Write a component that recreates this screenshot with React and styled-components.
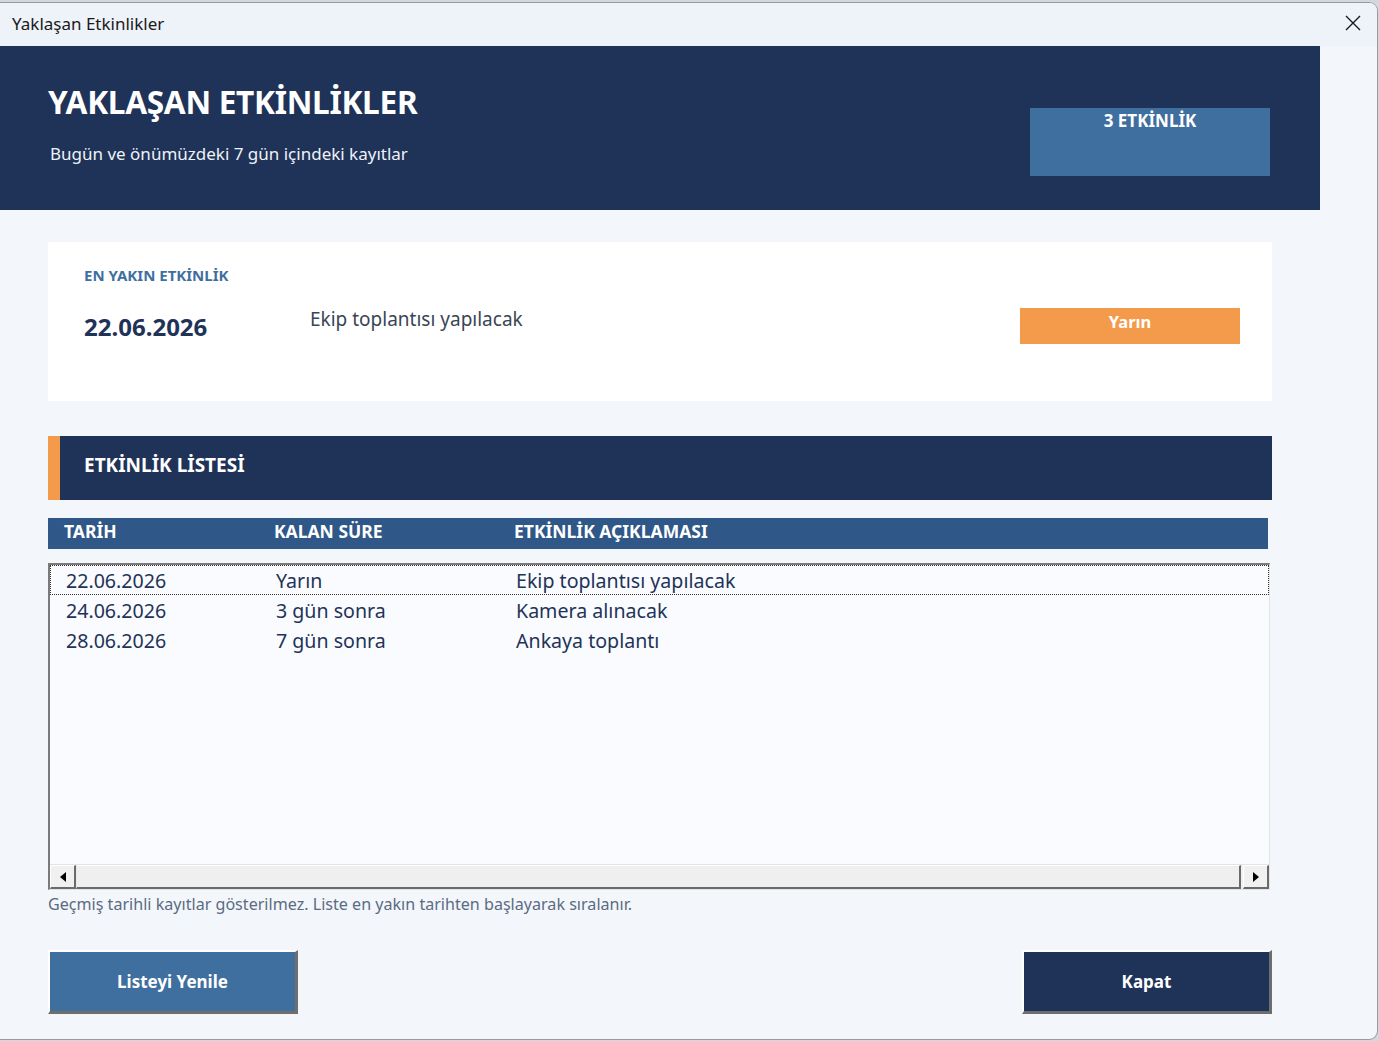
import React from 'react'
import styled, { createGlobalStyle } from 'styled-components'

const GlobalStyle = createGlobalStyle`
  html, body {
    margin: 0;
    padding: 0;
    background: #cfd8e3;
  }
  body {
    font-family: "Noto Sans", "Open Sans", sans-serif;
  }
`

const events = [
  { date: '22.06.2026', left: 'Yarın', text: 'Ekip toplantısı yapılacak' },
  { date: '24.06.2026', left: '3 gün sonra', text: 'Kamera alınacak' },
  { date: '28.06.2026', left: '7 gün sonra', text: 'Ankaya toplantı' },
]

const Window = styled.div`
  margin-top: 2px;
  width: 1378px;
  height: 1038px;
  box-sizing: border-box;
  border: 1px solid #9a9a9a;
  border-left: none;
  border-radius: 0 9px 9px 0;
  background: #f3f6fb;
  overflow: hidden;
  display: flex;
  flex-direction: column;
`

const TitleBar = styled.div`
  height: 43px;
  flex: none;
  box-sizing: border-box;
  display: flex;
  align-items: center;
  justify-content: space-between;
  padding: 0 14px 3px 12px;
  background: #eef2f9;
  color: #1a1a1a;
  font-size: 17px;
`

const CloseButton = styled.button`
  border: none;
  background: transparent;
  padding: 0;
  width: 20px;
  height: 20px;
  display: flex;
  align-items: center;
  justify-content: center;
  cursor: pointer;
`

const Header = styled.header`
  width: 1320px;
  height: 164px;
  flex: none;
  box-sizing: border-box;
  background: #1f3358;
  display: flex;
  justify-content: space-between;
  padding: 0 50px 0 48px;
`

const HeaderText = styled.div`
  padding-top: 37px;
`

const HeaderTitle = styled.h1`
  margin: 0;
  color: #ffffff;
  font-size: 31.6px;
  font-weight: 700;
  line-height: 38px;
  letter-spacing: -0.3px;
`

const HeaderSub = styled.p`
  margin: 22px 0 0 2px;
  color: #eef2f8;
  font-size: 17px;
  line-height: 22px;
`

const CountBadge = styled.div`
  margin-top: 62px;
  width: 240px;
  height: 68px;
  background: #3f6f9f;
  color: #ffffff;
  font-weight: 700;
  font-size: 17px;
  text-align: center;
  line-height: 26px;
`

const Body = styled.div`
  padding: 0 0 0 48px;
  width: 1224px;
`

const Card = styled.section`
  margin-top: 32px;
  height: 159px;
  box-sizing: border-box;
  background: #ffffff;
  padding: 22px 32px 0 36px;
`

const CardLabel = styled.div`
  color: #3f6fa0;
  font-size: 15px;
  font-weight: 700;
  line-height: 22px;
`

const CardRow = styled.div`
  margin-top: 18px;
  display: grid;
  grid-template-columns: 226px 1fr 220px;
`

const CardDate = styled.div`
  color: #1f3358;
  font-size: 24px;
  font-weight: 700;
  line-height: 30px;
  padding-top: 8px;
`

const CardText = styled.div`
  color: #3a4556;
  font-size: 19px;
  line-height: 26px;
  padding-top: 2px;
`

const WhenBadge = styled.div`
  margin-top: 4px;
  height: 36px;
  background: #f39b4a;
  color: #ffffff;
  font-size: 16.5px;
  font-weight: 700;
  text-align: center;
  line-height: 28px;
`

const SectionBar = styled.div`
  margin-top: 35px;
  height: 64px;
  box-sizing: border-box;
  background: #1f3358;
  border-left: 12px solid #f39b4a;
  display: flex;
  align-items: center;
  padding: 0 0 6px 24px;
  color: #ffffff;
  font-size: 19px;
  font-weight: 700;
`

const Columns = styled.div`
  display: grid;
  grid-template-columns: ${({ $indent }) => `${210 + $indent}px ${240}px 1fr`};
`

const ColumnHead = styled(Columns)`
  margin-top: 18px;
  width: 1220px;
  height: 31px;
  box-sizing: border-box;
  background: #2f5788;
  color: #ffffff;
  font-weight: 700;
  font-size: 17.5px;
  line-height: 27px;
  padding-left: 16px;
`

const ListBox = styled.div`
  margin-top: 14px;
  width: 1222px;
  height: 327px;
  box-sizing: border-box;
  border-top: 2px solid #7a7a7a;
  border-left: 2px solid #7a7a7a;
  border-right: 1px solid #e3e3e3;
  border-bottom: 1px solid #e3e3e3;
  background: #fafbfe;
  display: flex;
  flex-direction: column;
  justify-content: space-between;
`

const Rows = styled.div`
  padding-top: 0;
`

const Row = styled(Columns)`
  height: 30px;
  box-sizing: border-box;
  padding-left: 15px;
  border: 1px ${({ $focused }) => ($focused ? 'dotted #3a3020' : 'solid transparent')};
  color: #1f3358;
  font-size: 19.6px;
  line-height: 30px;
`

const ScrollBar = styled.div`
  height: 24px;
  display: flex;
  background: #f0f0f0;
  border-top: 1px solid #e3e3e3;
`

const ScrollButton = styled.div`
  width: 26px;
  flex: none;
  box-sizing: border-box;
  border-top: 1px solid #ffffff;
  border-left: 1px solid #ffffff;
  border-right: 2px solid #6a6a6a;
  border-bottom: 2px solid #6a6a6a;
  background: #f0f0f0;
  display: flex;
  align-items: center;
  justify-content: center;
`

const ScrollTrack = styled.div`
  flex: 1;
  box-sizing: border-box;
  border-top: 1px solid #ffffff;
  border-left: 1px solid #e8e8e8;
  border-right: 2px solid #6a6a6a;
  border-bottom: 2px solid #6a6a6a;
  background: #efefef;
  margin-right: 2px;
`

const Note = styled.p`
  margin: 3px 0 0 0;
  color: #5b6b82;
  font-size: 16.1px;
  line-height: 22px;
`

const Actions = styled.div`
  margin-top: 35px;
  display: flex;
  justify-content: space-between;
`

const ActionButton = styled.button`
  width: 250px;
  height: 64px;
  box-sizing: border-box;
  border-top: 2px solid #ffffff;
  border-left: 2px solid #ffffff;
  border-right: 3px solid #6e6e6e;
  border-bottom: 3px solid #6e6e6e;
  background: ${({ $dark }) => ($dark ? '#1f3358' : '#3f6f9f')};
  color: #ffffff;
  font-family: "Noto Sans", "Open Sans", sans-serif;
  font-size: 17px;
  font-weight: 700;
  cursor: pointer;
`

const Arrow = ({ right }) => (
  <svg width="6" height="10" viewBox="0 0 6 10">
    <path d={right ? 'M0 0 L6 5 L0 10 Z' : 'M6 0 L0 5 L6 10 Z'} fill="#000" />
  </svg>
)

export default function App() {
  return (
    <>
      <GlobalStyle />
      <Window>
        <TitleBar>
          <span>Yaklaşan Etkinlikler</span>
          <CloseButton aria-label="Kapat">
            <svg width="16" height="16" viewBox="0 0 16 16">
              <path d="M1 1 L15 15 M15 1 L1 15" stroke="#1a1a1a" strokeWidth="1.4" />
            </svg>
          </CloseButton>
        </TitleBar>

        <Header>
          <HeaderText>
            <HeaderTitle>YAKLAŞAN ETKİNLİKLER</HeaderTitle>
            <HeaderSub>Bugün ve önümüzdeki 7 gün içindeki kayıtlar</HeaderSub>
          </HeaderText>
          <CountBadge>3 ETKİNLİK</CountBadge>
        </Header>

        <Body>
          <Card>
            <CardLabel>EN YAKIN ETKİNLİK</CardLabel>
            <CardRow>
              <CardDate>22.06.2026</CardDate>
              <CardText>Ekip toplantısı yapılacak</CardText>
              <WhenBadge>Yarın</WhenBadge>
            </CardRow>
          </Card>

          <SectionBar>ETKİNLİK LİSTESİ</SectionBar>

          <ColumnHead $indent={0}>
            <span>TARİH</span>
            <span>KALAN SÜRE</span>
            <span>ETKİNLİK AÇIKLAMASI</span>
          </ColumnHead>

          <ListBox>
            <Rows>
              {events.map((e, i) => (
                <Row key={e.date} $indent={0} $focused={i === 0}>
                  <span>{e.date}</span>
                  <span>{e.left}</span>
                  <span>{e.text}</span>
                </Row>
              ))}
            </Rows>
            <ScrollBar>
              <ScrollButton><Arrow /></ScrollButton>
              <ScrollTrack />
              <ScrollButton><Arrow right /></ScrollButton>
            </ScrollBar>
          </ListBox>

          <Note>Geçmiş tarihli kayıtlar gösterilmez. Liste en yakın tarihten başlayarak sıralanır.</Note>

          <Actions>
            <ActionButton>Listeyi Yenile</ActionButton>
            <ActionButton $dark>Kapat</ActionButton>
          </Actions>
        </Body>
      </Window>
    </>
  )
}
